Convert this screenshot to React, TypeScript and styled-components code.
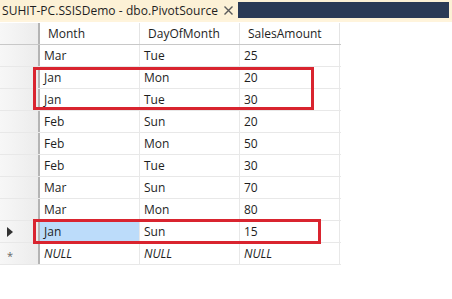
import React from 'react';
import styled, { createGlobalStyle } from 'styled-components';

const rows = [
  { month: 'Mar', day: 'Tue', amount: '25' },
  { month: 'Jan', day: 'Mon', amount: '20' },
  { month: 'Jan', day: 'Tue', amount: '30' },
  { month: 'Feb', day: 'Sun', amount: '20' },
  { month: 'Feb', day: 'Mon', amount: '50' },
  { month: 'Feb', day: 'Tue', amount: '30' },
  { month: 'Mar', day: 'Sun', amount: '70' },
  { month: 'Mar', day: 'Mon', amount: '80' },
  { month: 'Jan', day: 'Sun', amount: '15', current: true },
];

const App: React.FC = () => {
  return (
    <Page>
      <GlobalStyle />
      <TabStrip>
        <TabTitle>SUHIT-PC.SSISDemo - dbo.PivotSource</TabTitle>
        <CloseBtn>
          <svg width="9" height="9" viewBox="0 0 9 9">
            <path d="M0.5 0.5 L8.5 8.5 M8.5 0.5 L0.5 8.5" stroke="#5a5a5a" strokeWidth="1.4" />
          </svg>
        </CloseBtn>
        <DarkFill />
      </TabStrip>
      <TabEdge />
      <GridWrap>
        <Row>
          <RowHead />
          <HeadCell>Month</HeadCell>
          <HeadCell>DayOfMonth</HeadCell>
          <HeadCell>SalesAmount</HeadCell>
        </Row>
        {rows.map((r, i) => (
          <Row key={i}>
            <RowHead>{r.current && <Arrow />}</RowHead>
            <Cell selected={r.current}>{r.month}</Cell>
            <Cell>{r.day}</Cell>
            <Cell>{r.amount}</Cell>
          </Row>
        ))}
        <Row>
          <RowHead>
            <Star>*</Star>
          </RowHead>
          <Cell italic>NULL</Cell>
          <Cell italic>NULL</Cell>
          <Cell italic>NULL</Cell>
        </Row>
        {/* red highlight boxes drawn over the grid */}
        <Highlight style={{ top: 44, left: 33, width: 281, height: 43 }} />
        <Highlight style={{ top: 196, left: 33, width: 288, height: 25 }} />
      </GridWrap>
    </Page>
  );
};

const GlobalStyle = createGlobalStyle`
  body {
    margin: 0;
    background: #fff;
    font-family: "Open Sans", "Noto Sans", sans-serif;
  }
`;

const Page = styled.div`
  width: 452px;
  height: 299px;
  overflow: hidden;
  background: #fff;
`;

const TabStrip = styled.div`
  display: flex;
  align-items: center;
  height: 20px;
  background: #fcf1d6;
`;

const TabTitle = styled.div`
  font-size: 12px;
  color: #1e1e1e;
  padding-left: 2px;
  white-space: nowrap;
  letter-spacing: 0.05px;
`;

const CloseBtn = styled.div`
  display: flex;
  margin-left: 6px;
  margin-top: 1px;
`;

const DarkFill = styled.div`
  flex: 1;
  align-self: flex-start;
  height: 16px;
  margin: 2px 3px 0 5px;
  background: #293955;
`;

const TabEdge = styled.div`
  height: 2px;
  background: #fff4dc;
  margin-bottom: 1px;
`;

const GridWrap = styled.div`
  position: relative;
  width: 341px;
`;

const Row = styled.div`
  display: grid;
  grid-template-columns: 40px 100px 100px 100px;
  height: 22px;
  border-bottom: 1px solid #e8e8e8;
  box-sizing: border-box;

  &:first-child {
    border-bottom: 1px solid #c8c8c8;
  }
`;

const RowHead = styled.div`
  background: linear-gradient(to right, #f7f7f7, #ececec);
  border-right: 2px solid #b4b4b4;
  display: flex;
  align-items: center;
  padding-left: 7px;
  box-sizing: border-box;
`;

const Arrow = styled.div`
  width: 0;
  height: 0;
  border-top: 5px solid transparent;
  border-bottom: 5px solid transparent;
  border-left: 6px solid #333;
`;

const Star = styled.span`
  font-size: 11px;
  color: #666;
  margin-top: 3px;
`;

const HeadCell = styled.div`
  font-size: 12px;
  color: #1e1e1e;
  padding-left: 8px;
  display: flex;
  align-items: center;
  border-right: 1px solid #e4e4e4;
`;

const Cell = styled.div<{ selected?: boolean; italic?: boolean }>`
  font-size: 12px;
  color: #1e1e1e;
  padding-left: 4px;
  display: flex;
  align-items: center;
  border-right: 1px solid #e8e8e8;
  background: ${p => (p.selected ? '#bcdcfa' : '#fff')};
  font-style: ${p => (p.italic ? 'italic' : 'normal')};
`;

const Highlight = styled.div`
  position: absolute;
  border: 3px solid #d9242f;
  box-sizing: border-box;
  pointer-events: none;
`;

export default App;
